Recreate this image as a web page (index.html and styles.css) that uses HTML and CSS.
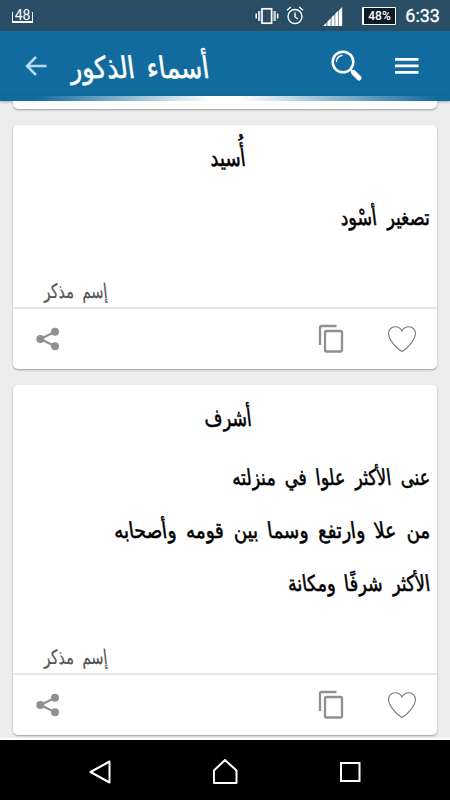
FILE: index.html
```html
<!DOCTYPE html>
<html lang="ar">
<head>
    <meta charset="UTF-8">
    <meta name="viewport" content="width=device-width, initial-scale=1.0">
    <title>أسماء الذكور</title>
    <link rel="stylesheet" href="styles.css">
</head>
<body>
    <!-- Status bar -->
    <div class="status-bar">
        <div class="battery-note"><span>48</span></div>
        <svg class="vibrate" width="24" height="18" viewBox="0 0 24 18" fill="none" stroke="#fff">
            <rect x="7" y="1.800" width="9.600" height="14.400" stroke-width="1.700"/>
            <path d="M4.200 4v10M19.600 4v10" stroke-width="2.400" stroke="#cbd5dc"/>
            <path d="M1.200 6.500v5M22.600 6.500v5" stroke-width="1.500"/>
        </svg>
        <svg class="alarm" width="18" height="19" viewBox="0 0 18 19" fill="none" stroke="#fff" stroke-width="1.400">
            <circle cx="9" cy="10.500" r="7"/>
            <path d="M9 6.500v4.500l3 2M1 4.200L4.800 1M17 4.200L13.200 1"/>
        </svg>
        <svg class="signal" width="20" height="19" viewBox="0 0 20 19" fill="#fff">
            <path d="M0 19L3.500 15.500V19zM4.300 14.700L7.700 11.300V19H4.300zM8.400 10.600L11.600 7.400V19H8.400zM12.200 6.800L15.400 3.600V19H12.200zM16 3.200L19.200 0V19H16z"/>
        </svg>
        <div class="battery">48%</div>
        <div class="clock">6:33</div>
    </div>

    <!-- Toolbar -->
    <header class="toolbar">
        <svg class="back" width="22" height="20" viewBox="0 0 22 20" fill="none" stroke="#b5dcf2" stroke-width="2.500">
            <path d="M21.500 10H2M11 1L2 10l9 9"/>
        </svg>
        <h1><span class="script title">أسماء الذكور</span></h1>
        <svg class="search" width="32" height="32" viewBox="0 0 32 32" fill="none" stroke="#fff" stroke-linecap="round">
            <circle cx="12" cy="12" r="10.300" stroke-width="2.500"/>
            <path d="M5.500 11.500a6.500 6.500 0 0 1 5.500-6" stroke-width="1.300"/>
            <path d="M19.500 19.500l3 3" stroke-width="2"/>
            <path d="M22.500 22.500l5.500 5.500" stroke-width="5"/>
        </svg>
        <svg class="menu" width="24" height="16" viewBox="0 0 24 16" fill="#fff">
            <path d="M0 0h23.500v2.700H0zM0 6.500h23.500v2.700H0zM0 13h23.500v2.700H0z"/>
        </svg>
    </header>
    <div class="shine"></div>

    <!-- Names list -->
    <main class="list">
        <article class="card card-end"></article>

        <article class="card">
            <div class="card-body">
                <h2><span class="script name-osaid">أُسيد</span></h2>
                <p><span class="script line-osaid">تصغير أسْود</span></p>
                <div class="tag"><span class="script">إسم مذكر</span></div>
            </div>
            <div class="actions">
                <svg class="share" width="24" height="24" viewBox="0 0 24 24" fill="#909090">
                    <path d="M4.500 12L19 4.800M4.500 12l14.500 7.200" stroke="#909090" stroke-width="2.200"/>
                    <circle cx="4.300" cy="12" r="4"/><circle cx="19" cy="4.700" r="4"/><circle cx="19" cy="19.300" r="4"/>
                </svg>
                <svg class="copy" width="26" height="29" viewBox="0 0 26 29" fill="none" stroke="#909090" stroke-width="2.300">
                    <path d="M18.500 2H3.500Q2 2 2 3.500V21"/>
                    <rect x="7" y="7" width="17" height="20.500" rx="1.500"/>
                </svg>
                <svg class="heart" width="28" height="26" viewBox="0 0 28 26" fill="none" stroke="#777" stroke-width="1.100">
                    <path d="M14 25.400C10 23.500 0.600 14.500 0.600 7.500C0.600 3.500 3.500 0.700 7 0.700C10.500 0.700 12.800 2.300 14 4.900C15.200 2.300 17.500 0.700 21 0.700C24.500 0.700 27.400 3.500 27.400 7.500C27.400 14.500 18 23.500 14 25.400z"/>
                </svg>
            </div>
        </article>

        <article class="card">
            <div class="card-body">
                <h2><span class="script name-ashraf">أشرف</span></h2>
                <p><span class="script line-status">عنى الأكثر علوا في منزلته</span></p>
                <p><span class="script line-rise">من علا وارتفع وسما بين قومه وأصحابه</span></p>
                <p><span class="script line-honour">الأكثر شرفًا ومكانة</span></p>
                <div class="tag"><span class="script">إسم مذكر</span></div>
            </div>
            <div class="actions">
                <svg class="share" width="24" height="24" viewBox="0 0 24 24" fill="#909090">
                    <path d="M4.500 12L19 4.800M4.500 12l14.500 7.200" stroke="#909090" stroke-width="2.200"/>
                    <circle cx="4.300" cy="12" r="4"/><circle cx="19" cy="4.700" r="4"/><circle cx="19" cy="19.300" r="4"/>
                </svg>
                <svg class="copy" width="26" height="29" viewBox="0 0 26 29" fill="none" stroke="#909090" stroke-width="2.300">
                    <path d="M18.500 2H3.500Q2 2 2 3.500V21"/>
                    <rect x="7" y="7" width="17" height="20.500" rx="1.500"/>
                </svg>
                <svg class="heart" width="28" height="26" viewBox="0 0 28 26" fill="none" stroke="#777" stroke-width="1.100">
                    <path d="M14 25.400C10 23.500 0.600 14.500 0.600 7.500C0.600 3.500 3.500 0.700 7 0.700C10.500 0.700 12.800 2.300 14 4.900C15.200 2.300 17.500 0.700 21 0.700C24.500 0.700 27.400 3.500 27.400 7.500C27.400 14.500 18 23.500 14 25.400z"/>
                </svg>
            </div>
        </article>
    </main>

    <!-- Navigation bar -->
    <nav class="nav-bar">
        <svg width="24" height="26" viewBox="0 0 24 26" fill="none" stroke="#fff" stroke-width="2" stroke-linejoin="round">
            <path d="M21.500 2.500V23.500L2.500 13z"/>
        </svg>
        <svg width="26" height="26" viewBox="0 0 26 26" fill="none" stroke="#fff" stroke-width="2" stroke-linejoin="round">
            <path d="M12 1L23.500 11.500V24H0.900V11.500z"/>
        </svg>
        <svg width="22" height="22" viewBox="0 0 22 22" fill="none" stroke="#fff" stroke-width="2">
            <rect x="2" y="2" width="18.500" height="18"/>
        </svg>
    </nav>
</body>
</html>
```
FILE: styles.css
```css
* {
    box-sizing: border-box;
}

body {
    margin: 0;
    width: 450px;
    height: 800px;
    display: flex;
    flex-direction: column;
    overflow: hidden;
    background-color: #ededed;
    font-family: Roboto, "Liberation Sans", sans-serif;
}

h1, h2, p {
    margin: 0;
    font-weight: normal;
}

svg {
    display: block;
    flex: none;
}

/* Status bar */
.status-bar {
    height: 31px;
    flex: none;
    display: flex;
    align-items: center;
    padding: 0 10px 0 12px;
    background-color: #284d64;
    color: #fff;
}

.battery-note {
    width: 21px;
    height: 11px;
    margin: 3px auto 0 0;
    border: 1.5px solid #fff;
    border-top: none;
    border-bottom-width: 2px;
    display: flex;
    align-items: flex-end;
    justify-content: center;
    font-size: 14px;
    line-height: 12px;
}

.alarm {
    margin-left: 7px;
}

.signal {
    margin: 2px 0 0 19px;
}

.battery {
    width: 34px;
    height: 18px;
    margin-left: 19px;
    border: 1px solid #fff;
    border-left-width: 2px;
    border-radius: 1px;
    background-color: #0c1c27;
    font-size: 12px;
    font-weight: 500;
    line-height: 17px;
    text-align: center;
}

.clock {
    width: 36px;
    margin-left: 8px;
    font-size: 18px;
    line-height: 31px;
    text-align: right;
    -webkit-text-stroke: 0.3px #fff;
}

/* Toolbar */
.toolbar {
    height: 65px;
    flex: none;
    display: flex;
    align-items: center;
    padding: 4px 31px 0 25px;
    background-color: #126b9f;
    color: #fff;
}

.toolbar h1 {
    width: 140px;
    height: 50px;
    margin: 0 auto 0 22px;
    padding-top: 2px;
    display: flex;
    justify-content: flex-end;
    font-size: 30px;
    line-height: 50px;
}

.menu {
    margin-left: 32px;
}

.shine {
    height: 5px;
    flex: none;
    background: linear-gradient(to right, #126b9f 8%, #fff 47%, #fff 53%, #126b9f 97%);
    box-shadow: 0 1px 3px rgba(0, 0, 0, 0.3);
}

/* Tall, narrow lettering leaning back */
.script {
    display: inline-block;
    flex: none;
    direction: rtl;
    white-space: nowrap;
    font-family: "DejaVu Sans Condensed", "DejaVu Sans", sans-serif;
    word-spacing: 4px;
    transform: scaleX(0.81) skewX(8deg);
    transform-origin: right center;
    -webkit-text-stroke: 0.5px currentColor;
}

.title {
    transform: scaleX(0.94) skewX(8deg);
}

.name-osaid {
    transform: scaleX(0.85) skewX(8deg);
}

.line-osaid {
    transform: scaleX(0.89) skewX(8deg);
}

.line-status {
    transform: scaleX(0.865) skewX(8deg);
}

.line-rise {
    transform: scaleX(0.93) skewX(8deg);
}

.line-honour {
    transform: scaleX(0.89) skewX(8deg);
}

/* Cards */
.list {
    flex: 1;
    min-height: 0;
    padding: 0 13px;
    border-bottom: 2px solid #fff;
    overflow: hidden;
}

.card {
    margin-bottom: 16px;
    border-radius: 5px;
    background-color: #fff;
    box-shadow: 0 1px 2px rgba(0, 0, 0, 0.35);
}

.card-end {
    height: 8px;
    border-radius: 0 0 5px 5px;
}

.card-body {
    padding: 0 7px 0 30px;
    color: #000;
}

.card h2 {
    height: 66px;
    padding: 6px 17px 0 0;
    display: flex;
    justify-content: center;
    font-size: 24px;
    line-height: 54px;
}

.card h2 .script {
    transform-origin: center;
}

.card p {
    height: 53px;
    display: flex;
    justify-content: flex-start;
    direction: rtl;
    font-size: 22px;
    line-height: 53px;
}

.tag {
    height: 63px;
    padding-top: 30px;
    display: flex;
    color: #555;
    font-size: 20px;
    line-height: 34px;
}

.tag .script {
    transform-origin: left center;
    -webkit-text-stroke-width: 0.2px;
}

.actions {
    height: 62px;
    display: flex;
    align-items: center;
    padding: 0 21px 1px 23px;
    border-top: 2px solid #e5e5e5;
}

.copy {
    margin-left: auto;
}

.heart {
    margin-left: 44px;
}

/* Navigation bar */
.nav-bar {
    height: 60px;
    flex: none;
    display: flex;
    align-items: center;
    justify-content: space-between;
    padding: 4px 89px 0 88px;
    background-color: #000;
}
```
